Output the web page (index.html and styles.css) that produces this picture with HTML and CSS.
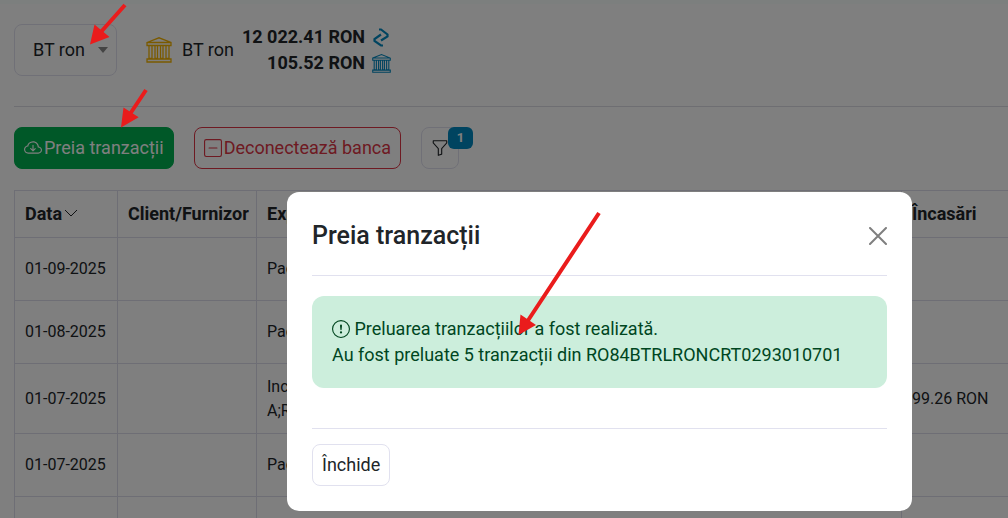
FILE: index.html
```html
<!DOCTYPE html>
<html lang="ro">
<head>
  <meta charset="UTF-8" />
  <meta name="viewport" content="width=device-width, initial-scale=1" />
  <title>Preia tranzacții</title>
  <link rel="stylesheet" href="styles.css">
</head>
<body>
  <!-- shared icon -->
  <svg class="defs" width="0" height="0">
    <symbol id="icon-bank" viewBox="0 0 26 26">
      <path d="M1 5.500 13 .8l12 4.700v3H1zM1 5.500h24M3 8.500v13h3v-13M9 8.500v13h2.500v-13M14.500 8.500v13H17v-13M20 8.500v13h3v-13M1 22h24v3H1z" />
    </symbol>
  </svg>

  <main class="page">
    <section class="account-bar">
      <div class="account-select">
        <select id="account" aria-label="Cont">
          <option>BT ron</option>
        </select>
      </div>
      <div class="account">
        <svg class="bank-logo"><use href="#icon-bank" /></svg>
        <span>BT ron</span>
      </div>
      <div class="balances">
        <div class="balance">
          <span>12 022.41 RON</span>
          <svg class="balance-icon swap" viewBox="0 0 19 19">
            <path d="M7 1.500h2L15.500 6.500v2L9 12.500M11 17.500H9L2.500 13v-2L9 6.500" />
          </svg>
        </div>
        <div class="balance">
          <span>105.52 RON</span>
          <svg class="balance-icon"><use href="#icon-bank" /></svg>
        </div>
      </div>
    </section>

    <section class="toolbar">
      <button class="btn btn-success" type="button">
        <svg class="icon" viewBox="0 0 16 16">
          <path d="M4.400 3.340A5.530 5.530 0 0 1 8 2c2.690 0 4.920 2 5.170 4.580C14.760 6.800 16 8.140 16 9.770 16 11.570 14.500 13 12.690 13H3.780C1.710 13 0 11.370 0 9.320c0-1.760 1.270-3.220 2.940-3.570.15-.9.7-1.750 1.460-2.410zm.66.760c-.76.660-1.150 1.440-1.150 2.060v.450l-.45.050C2.060 6.810 1 7.950 1 9.320 1 10.790 2.230 12 3.780 12h8.910C13.980 12 15 10.990 15 9.770c0-1.230-1.020-2.230-2.310-2.230h-.5v-.5C12.190 4.820 10.330 3 8 3a4.530 4.530 0 0 0-2.940 1.100z" />
          <path d="M7.650 10.850a.5.5 0 0 0 .7 0l2-2a.5.5 0 0 0-.7-.7L8.500 9.290V5.500a.5.5 0 0 0-1 0v3.790L6.350 8.150a.5.5 0 1 0-.7.700z" />
        </svg>
        Preia tranzacții
      </button>
      <button class="btn btn-danger" type="button">
        <svg class="icon" viewBox="0 0 16 16">
          <path d="M14 1a1 1 0 0 1 1 1v12a1 1 0 0 1-1 1H2a1 1 0 0 1-1-1V2a1 1 0 0 1 1-1zM2 0a2 2 0 0 0-2 2v12a2 2 0 0 0 2 2h12a2 2 0 0 0 2-2V2a2 2 0 0 0-2-2z" />
          <path d="M4 8a.5.5 0 0 1 .5-.5h7a.5.5 0 0 1 0 1h-7A.5.5 0 0 1 4 8" />
        </svg>
        Deconectează banca
      </button>
      <button class="btn btn-filter" type="button" aria-label="Filtre">
        <svg class="icon" viewBox="0 0 16 16">
          <path d="M1.500 1.500A.5.5 0 0 1 2 1h12a.5.5 0 0 1 .5.500v2a.5.5 0 0 1-.13.330L10 8.690V13.500a.5.5 0 0 1-.34.470l-3 1A.5.5 0 0 1 6 14.500V8.690L1.630 3.830a.5.5 0 0 1-.13-.330zm1 .5v1.310l4.370 4.860a.5.5 0 0 1 .13.330v5.310l2-.67V8.500a.5.5 0 0 1 .13-.330L13.500 3.310V2z" />
        </svg>
        <span class="badge">1</span>
      </button>
    </section>

    <div class="table-wrap">
      <table class="transactions">
        <colgroup>
          <col class="col-date"><col class="col-client"><col class="col-details"><col class="col-income">
        </colgroup>
        <thead>
          <tr>
            <th>Data<svg class="sort" viewBox="0 0 14 14"><path d="M1 4l6 6 6-6" /></svg></th>
            <th>Client/Furnizor</th>
            <th>Explicații</th>
            <th>Încasări</th>
          </tr>
        </thead>
        <tbody>
          <tr><td>01-09-2025</td><td></td><td>Pachet</td><td></td></tr>
          <tr><td>01-08-2025</td><td></td><td>Pachet</td><td></td></tr>
          <tr class="tall"><td>01-07-2025</td><td></td><td>Incasare<br>A;RON</td><td>99.26 RON</td></tr>
          <tr><td>01-07-2025</td><td></td><td>Pachet</td><td></td></tr>
          <tr class="last"><td></td><td></td><td></td><td></td></tr>
        </tbody>
      </table>
    </div>
  </main>

  <div class="backdrop">
    <div class="modal" role="dialog" aria-modal="true" aria-labelledby="modalTitle">
      <div class="modal-header">
        <h5 id="modalTitle">Preia tranzacții</h5>
        <button class="btn-close" type="button" aria-label="Close">
          <svg viewBox="0 0 18 18"><path d="M1 1l16 16M17 1L1 17" /></svg>
        </button>
      </div>
      <div class="modal-body">
        <div class="alert">
          <svg class="icon" viewBox="0 0 16 16">
            <path d="M8 15A7 7 0 1 1 8 1a7 7 0 0 1 0 14m0 1A8 8 0 1 0 8 0a8 8 0 0 0 0 16" />
            <path d="M7 11a1 1 0 1 1 2 0 1 1 0 0 1-2 0M7.100 5a.9.900 0 1 1 1.800 0l-.35 3.500a.55.550 0 0 1-1.100 0z" />
          </svg>
          Preluarea tranzacțiilor a fost realizată.<br>
          Au fost preluate 5 tranzacții din RO84BTRLRONCRT0293010701
        </div>
      </div>
      <div class="modal-footer">
        <button class="btn btn-light" type="button">Închide</button>
      </div>
    </div>
  </div>

  <!-- arrows over the steps -->
  <svg class="arrows" width="620" height="350">
    <path class="shaft" d="M125 5L100 33M146 90L130 114M599 213L527 322" />
    <path d="M90 44.500L94.500 24.500 109.500 37zM121 127.500L123.500 107.500 138.700 117.300zM518.500 335L520.500 314.500 536 325z" />
  </svg>
</body>
</html>
```

FILE: styles.css
```css
* {
  box-sizing: border-box;
}

body {
  margin: 0;
  height: 100vh;
  overflow: hidden;
  font-family: Roboto, "Liberation Sans", sans-serif;
  font-size: 18px;
  line-height: 26px;
  color: #212529;
  background-color: #fff;
}

.defs {
  position: absolute;
}

.page {
  height: 100%;
  overflow: hidden;
  padding-left: 14px;
  border-top: 4px solid #f9fffc;
}

.account-bar {
  display: flex;
  align-items: center;
  padding: 20px 0 30px;
  border-bottom: 1px solid #dcdce4;
}

.account-select {
  position: relative;
  margin-right: 29px;
}

.account-select select {
  width: 103px;
  height: 52px;
  padding: 0 18px;
  appearance: none;
  font: inherit;
  color: inherit;
  background-color: #fff;
  border: 1px solid #e1e1ef;
  border-radius: 8px;
}

.account-select::after {
  content: "";
  position: absolute;
  top: 23px;
  right: 9px;
  border: 5px solid transparent;
  border-top: 6px solid #888;
  border-bottom: 0;
  pointer-events: none;
}

.account {
  display: flex;
  align-items: center;
  gap: 10px;
  margin-right: 8px;
}

.bank-logo {
  width: 26px;
  height: 26px;
  fill: none;
  stroke: #f5b400;
  stroke-width: 1.3;
}

.balance {
  display: flex;
  align-items: center;
  justify-content: flex-end;
  gap: 7px;
  font-weight: bold;
}

.balance-icon {
  width: 19px;
  height: 19px;
  fill: none;
  stroke: #0088c0;
  stroke-width: 1.5;
}

.balance-icon.swap {
  stroke-width: 2.2;
}

.toolbar {
  display: flex;
  gap: 20px;
  padding: 20px 0 21px;
}

.btn {
  display: flex;
  align-items: center;
  gap: 2px;
  height: 42px;
  padding: 0 9px;
  font: inherit;
  border: 1px solid #e1e1ef;
  border-radius: 8px;
  cursor: pointer;
}

.icon {
  width: 18px;
  height: 18px;
  fill: currentColor;
}

.btn-success {
  color: #fff;
  background-color: #00b050;
  border-color: #00b050;
}

.btn-danger {
  color: #dc3545;
  background-color: #fff;
  border-color: #dc3545;
}

.btn-filter {
  position: relative;
  color: #212529;
  background-color: #fff;
}

.badge {
  position: absolute;
  top: -1px;
  right: -15px;
  width: 25px;
  height: 22px;
  font-size: 13px;
  font-weight: bold;
  line-height: 22px;
  color: #fff;
  background-color: #0088c0;
  border-radius: 6px;
}

.btn-light {
  color: #212529;
  background-color: #fff;
}

.table-wrap {
  overflow: hidden;
}

.transactions {
  width: 1130px;
  table-layout: fixed;
  border-collapse: collapse;
  font-size: 16px;
  line-height: 24px;
}

.col-date {
  width: 103px;
}

.col-client {
  width: 139px;
}

.col-details {
  width: 645px;
}

.transactions th,
.transactions td {
  height: 63px;
  padding: 0 10px;
  text-align: left;
  border: 1px solid #dcdcea;
}

.transactions th {
  height: 47px;
  font-size: 18px;
  white-space: nowrap;
}

.transactions .tall td {
  height: 70px;
}

.transactions .last td {
  height: 24px;
  border-bottom: 0;
}

.sort {
  width: 14px;
  height: 14px;
  margin-left: 2px;
  fill: none;
  stroke: currentColor;
}

.backdrop {
  position: fixed;
  inset: 0;
  display: flex;
  align-items: flex-start;
  padding: 192px 96px 0 287px;
  background-color: rgba(0, 0, 0, 0.5);
}

.modal {
  flex: 1;
  padding: 0 25px;
  background-color: #fff;
  border-radius: 12px;
}

.modal-header {
  display: flex;
  align-items: center;
  justify-content: space-between;
  padding: 30px 0 25px;
  border-bottom: 1px solid #e1e1ef;
}

.modal-header h5 {
  margin: 0;
  font-size: 25px;
  font-weight: 500;
  line-height: 28px;
}

.btn-close {
  display: flex;
  padding: 0;
  background: none;
  border: 0;
  cursor: pointer;
}

.btn-close svg {
  width: 18px;
  height: 18px;
  fill: none;
  stroke: #7f7f7f;
  stroke-width: 2;
  stroke-linecap: round;
}

.modal-body {
  padding: 20px 0 40px;
}

.alert {
  padding: 20px;
  color: #00461f;
  background-color: #cceedc;
  border-radius: 12px;
}

.alert .icon {
  vertical-align: -3px;
}

.modal-footer {
  padding: 15px 0 25px;
  border-top: 1px solid #e1e1ef;
}

.arrows {
  position: fixed;
  top: 0;
  left: 0;
  fill: #ea1c1c;
  pointer-events: none;
}

.arrows .shaft {
  fill: none;
  stroke: #ea1c1c;
  stroke-width: 4;
}
```
